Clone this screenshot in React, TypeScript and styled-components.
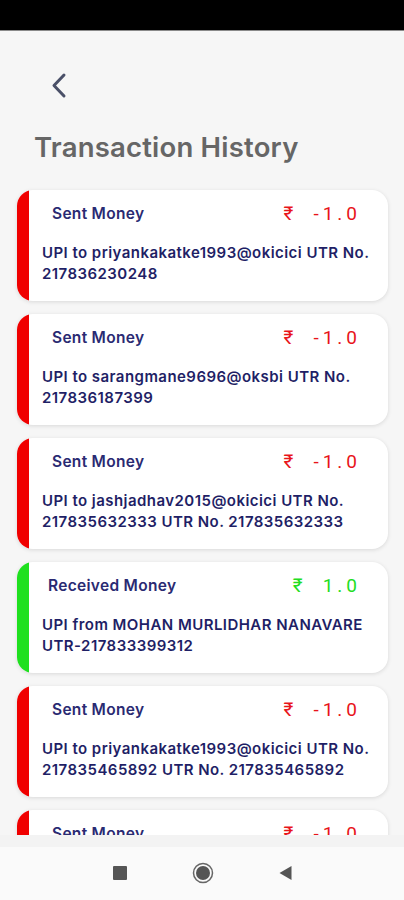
import React from "react";
import styled, { createGlobalStyle } from "styled-components";

const Global = createGlobalStyle`
  html, body { margin: 0; padding: 0; background: #f6f6f6; }
  * { box-sizing: border-box; }
`;

const Screen = styled.div`
  width: 404px;
  height: 900px;
  display: flex;
  flex-direction: column;
  background: #f6f6f6;
  overflow: hidden;
  font-family: Inter, "Open Sans", sans-serif;
`;

const StatusBar = styled.div`
  height: 31px;
  flex: none;
  background: #000;
  border-bottom: 1px solid #8a8a8a;
`;

const Header = styled.div`
  flex: none;
  display: flex;
  flex-direction: column;
  padding: 40px 0 0 34px;
`;

const BackButton = styled.button`
  width: 30px;
  height: 30px;
  margin-left: 10px;
  padding: 0;
  border: none;
  background: none;
  display: flex;
  align-items: center;
  justify-content: center;
`;

const Title = styled.h1`
  margin: 29px 0 0 0;
  font-family: Inter, sans-serif;
  font-weight: 600;
  font-size: 27.5px;
  line-height: 34px;
  color: #666;
  letter-spacing: 0.2px;
`;

const List = styled.div`
  flex: 1;
  overflow: hidden;
  display: flex;
  flex-direction: column;
  gap: 13px;
  padding: 26px 16px 0 17px;
`;

const Card = styled.div`
  flex: none;
  display: flex;
  height: 111px;
  background: #fff;
  border-radius: 16px;
  overflow: hidden;
  box-shadow: 0 1px 4px rgba(0, 0, 0, 0.12);
`;

const Stripe = styled.div<{ $color: string }>`
  width: 12px;
  flex: none;
  background: ${(p) => p.$color};
`;

const Body = styled.div`
  flex: 1;
  display: flex;
  flex-direction: column;
  padding: 10px 10px 0 13px;
`;

const TopRow = styled.div`
  display: flex;
  align-items: center;
  justify-content: space-between;
  height: 27px;
  padding-right: 21px;
`;

const Kind = styled.span<{ $indent: number }>`
  padding-left: ${(p) => p.$indent}px;
  font-weight: 600;
  font-size: 15.5px;
  letter-spacing: 0.3px;
  color: #2a2a72;
`;

const Amount = styled.span<{ $color: string }>`
  display: flex;
  align-items: baseline;
  font-family: Roboto, "DejaVu Sans", sans-serif;
  font-size: 19px;
  letter-spacing: 4px;
  color: ${(p) => p.$color};
  margin-right: -4px;
`;

const Rupee = styled.span`
  margin-right: 16px;
`;

const Desc = styled.div`
  margin-top: 15px;
  font-weight: 600;
  font-size: 15px;
  letter-spacing: 0.45px;
  line-height: 21px;
  color: #1f1f66;
`;

const NoWrap = styled.span`
  white-space: nowrap;
`;

const NavBar = styled.div`
  flex: none;
  height: 65px;
  background: #fafafa;
  border-top: 12px solid #f3f3f3;
  display: flex;
  align-items: center;
  justify-content: center;
  gap: 65px;
  padding-bottom: 2px;
`;

const NavSquare = styled.div`
  width: 14px;
  height: 14px;
  background: #555;
  border-radius: 1px;
`;

const NavIcon = styled.svg`
  display: block;
`;

type Tx = { kind: "sent" | "received"; desc: string[]; amount: string };

const txs: Tx[] = [
  { kind: "sent", desc: ["UPI to priyankakatke1993@okicici UTR No. 217836230248"], amount: "-1.0" },
  { kind: "sent", desc: ["UPI to sarangmane9696@oksbi UTR No. 217836187399"], amount: "-1.0" },
  { kind: "sent", desc: ["UPI to jashjadhav2015@okicici UTR No. 217835632333 UTR No. 217835632333"], amount: "-1.0" },
  { kind: "received", desc: ["UPI from MOHAN MURLIDHAR NANAVARE ", "UTR-217833399312"], amount: "1.0" },
  { kind: "sent", desc: ["UPI to priyankakatke1993@okicici UTR No. 217835465892 UTR No. 217835465892"], amount: "-1.0" },
  { kind: "sent", desc: ["UPI to priyankakatke1993@okicici UTR No. 217835465892"], amount: "-1.0" },
];

export default function App() {
  return (
    <>
      <Global />
      <Screen>
        <StatusBar />
        <Header>
          <BackButton aria-label="Back">
            <svg width="30" height="30" viewBox="0 0 30 30">
              <path d="M20 4 L10 14.5 L20 25" fill="none" stroke="#4a5068" strokeWidth="3" strokeLinecap="round" strokeLinejoin="round" />
            </svg>
          </BackButton>
          <Title>Transaction History</Title>
        </Header>
        <List>
          {txs.map((t, i) => {
            const sent = t.kind === "sent";
            const color = sent ? "#e8141a" : "#22dd22";
            return (
              <Card key={i}>
                <Stripe $color={sent ? "#f00000" : "#1fe01f"} />
                <Body>
                  <TopRow>
                    <Kind $indent={sent ? 10 : 6}>{sent ? "Sent Money" : "Received Money"}</Kind>
                    <Amount $color={color}>
                      <Rupee>₹</Rupee>
                      {t.amount}
                    </Amount>
                  </TopRow>
                  <Desc>
                    {t.desc.map((part, j) => (j === 0 ? part : <NoWrap key={j}>{part}</NoWrap>))}
                  </Desc>
                </Body>
              </Card>
            );
          })}
        </List>
        <NavBar>
          <NavSquare />
          <NavIcon width="22" height="22" viewBox="0 0 22 22">
            <circle cx="11" cy="11" r="9.5" fill="none" stroke="#666" strokeWidth="1.5" />
            <circle cx="11" cy="11" r="7" fill="#555" />
          </NavIcon>
          <NavIcon width="13" height="16" viewBox="0 0 13 16">
            <path d="M12.5 1 L0.5 8 L12.5 15 Z" fill="#555" />
          </NavIcon>
        </NavBar>
      </Screen>
    </>
  );
}
